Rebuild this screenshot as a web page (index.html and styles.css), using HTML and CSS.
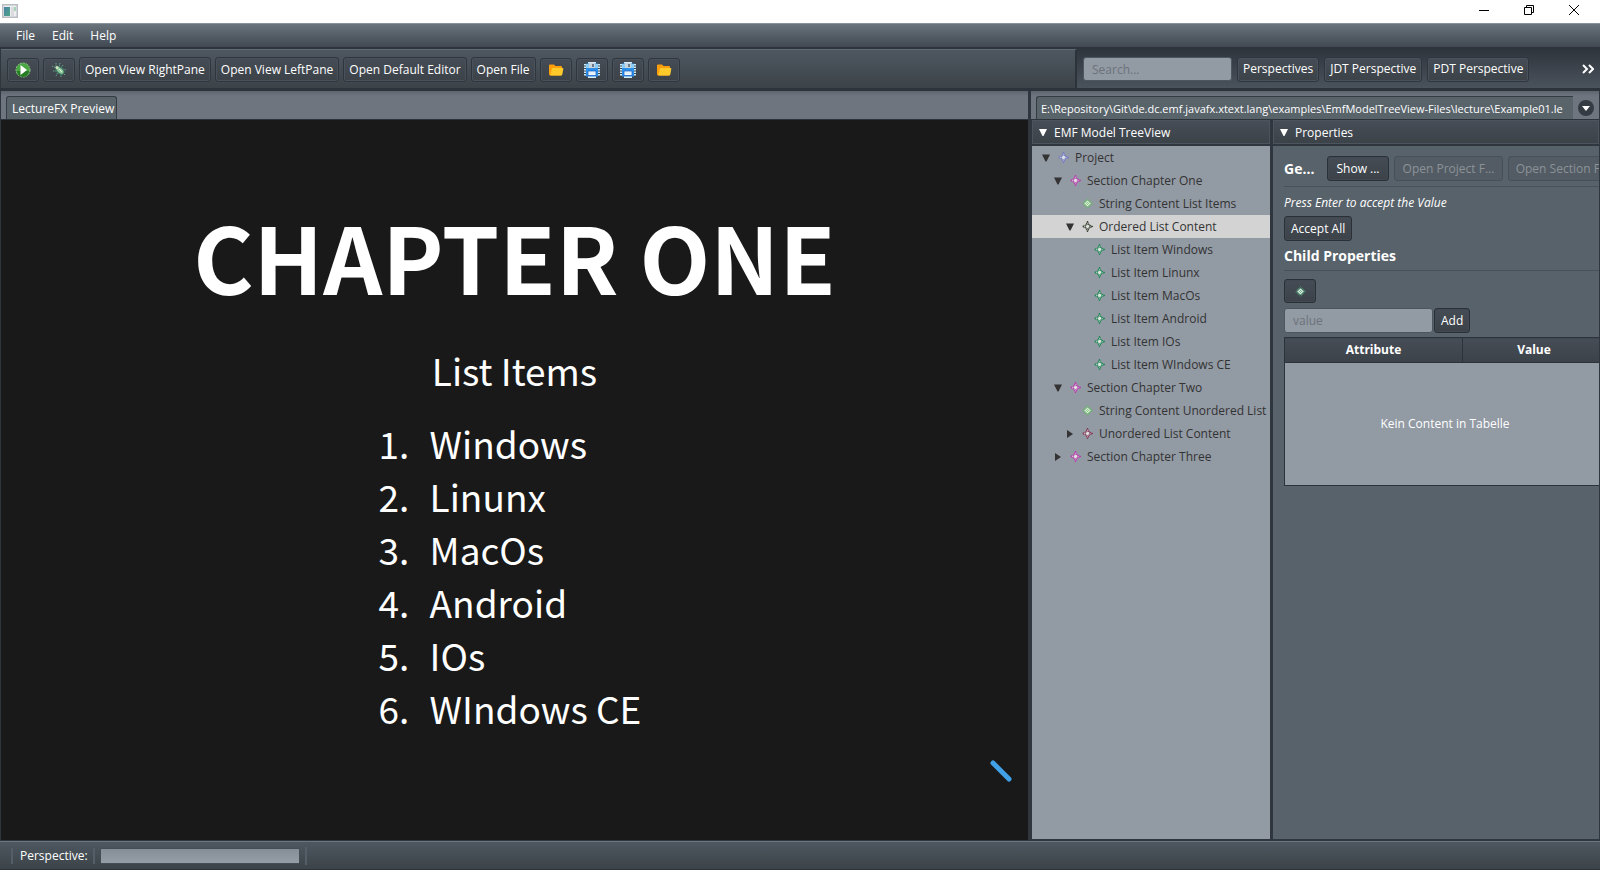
FILE: index.html
```html
<!DOCTYPE html>
<html lang="en">
<head>
<meta charset="utf-8">
<title>LectureFX</title>
<link rel="stylesheet" href="styles.css">
</head>
<body>
<svg class="defs" aria-hidden="true">
  <symbol id="node" viewBox="0 0 11 11">
    <path d="M5.500 .5 7 4 10.500 5.500 7 7 5.500 10.500 4 7 .5 5.500 4 4z" fill="#dde3df" stroke="currentColor" stroke-width="1.200" stroke-dasharray="1.700 .4"/>
    <path d="M5 3h1v1H5zM3 5h1v1H3zM7 5h1v1H7zM5 7h1v1H5z" fill="currentColor" opacity=".6"/>
  </symbol>
  <symbol id="node-full" viewBox="0 0 11 11">
    <path d="M5.500 .5 10.500 5.500 5.500 10.500 .5 5.500z" fill="none" stroke="currentColor" stroke-dasharray="1 .8"/>
    <path d="M5.500 2 9 5.500 5.500 9 2 5.500z" fill="#dcebdc" stroke="currentColor" stroke-width=".8"/>
    <path d="M5 4h1v1H5zM4 5h1v1H4zM6 5h1v1H6zM5 6h1v1H5z" fill="currentColor" opacity=".7"/>
  </symbol>
  <symbol id="folder" viewBox="0 0 16 14">
    <path d="M1 2.500Q1 1.500 2 1.500H6L7.500 3h5.500Q14 3 14 4v7q0 1.500-1.500 1.500h-10Q1 12.500 1 11z" fill="#ff9e0b"/>
    <path d="M5 5h9.500q1 0 .8 1l-1 5.500q-.2 1-1.300 1H3q-1 0-.5-1L3.800 6q.2-1 1.200-1z" fill="#ffcb2b"/>
  </symbol>
  <symbol id="save" viewBox="0 0 16 16">
    <path d="M4 1h8M4 15h8" stroke="#d5edf8" stroke-width="2"/>
    <path d="M1 2v12M15 2v12" stroke="#c7e9fb" stroke-width="2" stroke-dasharray="1.500 1"/>
    <rect x="2" y="1.500" width="12" height="13" fill="#2c8fe8"/>
    <path d="M2 2h3v4H2zM11 2h3v4h-3z" fill="#8bcbf4"/>
    <path d="M5 1h6v5H5z" fill="#c9d4dc"/><path d="M8 2h2v3H8z" fill="#6a7c8c"/>
    <path d="M4 9h8v4.500H4z" fill="#f4faff" stroke="#1b63c4" stroke-width=".8"/>
    <path d="M5 11h6" stroke="#cfe2f2" stroke-width=".8"/>
  </symbol>
  <symbol id="down" viewBox="0 0 8 7"><path d="M0 0h8L4.500 7h-1z" fill="currentColor"/></symbol>
  <symbol id="right" viewBox="0 0 6 8"><path d="M0 0 6 4 0 8z" fill="currentColor"/></symbol>
</svg>
<div class="app">
  <header class="titlebar">
    <svg class="app-icon" width="16" height="14" viewBox="0 0 16 14" aria-hidden="true"><rect x=".75" y=".75" width="14.500" height="12.500" fill="#eceef0" stroke="#b9bdc2" stroke-width="1.500"/><defs><linearGradient id="g" x2="1" y2="1"><stop stop-color="#4a82a8"/><stop offset="1" stop-color="#4ca483"/></linearGradient></defs><path d="M2 3h6v9H2z" fill="url(#g)"/><path d="M9 3h3v9H9z" fill="#d9dbde"/><path d="M12 3h2v4h-2z" fill="#a9d3b9"/></svg>
    <div class="window-controls">
      <button aria-label="Minimize"><svg width="12" height="12"><path d="M1 6.500h10" stroke="#000" fill="none"/></svg></button>
      <button aria-label="Restore"><svg width="12" height="12"><path d="M1.500 3.500h7v7h-7zM3.500 3V1.500h7v7H9" stroke="#000" fill="none"/></svg></button>
      <button aria-label="Close"><svg width="12" height="12"><path d="M1 1l10 10M11 1 1 11" stroke="#000" fill="none"/></svg></button>
    </div>
  </header>
  <nav class="menubar" aria-label="Main menu"><button>File</button><button>Edit</button><button>Help</button></nav>
  <div class="toolbars">
    <div class="toolbar main-tools">
      <button class="btn icon" aria-label="Run"><svg width="16" height="16" viewBox="0 0 16 16"><circle cx="8" cy="8" r="7" fill="#4aa543" stroke="#8cc686" stroke-dasharray="2 1"/><path d="M2 9a6 6 0 0 0 12 0z" fill="#277b25"/><path d="M5.500 3 12 8 5.500 13z" fill="#fff"/></svg></button>
      <button class="btn icon" aria-label="Debug"><svg width="16" height="16" viewBox="0 0 16 16"><path d="M5 1v4M9 1 8 5M1 4l4 2M2 9h4M5 14l2-4M15 8l-4-1M14 13l-3-3M10 15v-4M12 3l-2 3" stroke="#5fa588" stroke-width="1" stroke-dasharray="1.500 .7"/><ellipse cx="9" cy="8.500" rx="4.500" ry="2.800" transform="rotate(42 9 8.500)" fill="#8fc99d" stroke="#3f7c63"/><circle cx="6" cy="5.500" r="1.500" fill="#cfe8bf"/><path d="m8 7 3 3" stroke="#e3f4dc"/></svg></button>
      <button class="btn">Open View RightPane</button>
      <button class="btn">Open View LeftPane</button>
      <button class="btn">Open Default Editor</button>
      <button class="btn">Open File</button>
      <button class="btn icon" aria-label="Open folder"><svg width="16" height="14"><use href="#folder"/></svg></button>
      <button class="btn icon" aria-label="Save"><svg width="16" height="16"><use href="#save"/></svg></button>
      <button class="btn icon" aria-label="Save as"><svg width="16" height="16"><use href="#save"/></svg></button>
      <button class="btn icon" aria-label="Browse folder"><svg width="16" height="14"><use href="#folder"/></svg></button>
    </div>
    <div class="toolbar side-tools">
      <input class="field" type="text" placeholder="Search..." aria-label="Search">
      <button class="btn">Perspectives</button>
      <button class="btn">JDT Perspective</button>
      <button class="btn">PDT Perspective</button>
      <button class="overflow" aria-label="More tools"><svg width="12" height="10" viewBox="0 0 12 10"><path d="M1 1l4 4-4 4M7 1l4 4-4 4" fill="none" stroke="#fff" stroke-width="2"/></svg></button>
    </div>
  </div>
  <main class="workspace">
    <section class="editor">
      <div class="tabs" role="tablist"><button class="tab" role="tab" aria-selected="true">LectureFX Preview</button></div>
      <article class="slide">
        <h1>CHAPTER ONE</h1>
        <p>List Items</p>
        <ol><li>Windows</li><li>Linunx</li><li>MacOs</li><li>Android</li><li>IOs</li><li>WIndows CE</li></ol>
        <svg class="nav-mark" width="22" height="22" viewBox="0 0 22 22" aria-hidden="true"><path d="M3 3l16 16" stroke="#42a0e6" stroke-width="5" stroke-linecap="round"/></svg>
      </article>
    </section>
    <section class="model">
      <div class="tabs" role="tablist">
        <button class="tab path-tab" role="tab" aria-selected="true">E:\Repository\Git\de.dc.emf.javafx.xtext.lang\examples\EmfModelTreeView-Files\lecture\Example01.le</button>
        <button class="tab-menu" aria-label="Show tabs"><svg width="8" height="5" viewBox="0 0 8 5"><path d="M0 0h8L4 5z" fill="#fff"/></svg></button>
      </div>
      <div class="split">
        <section class="pane tree-pane">
          <h2 class="pane-title"><svg width="8" height="7"><use href="#down"/></svg>EMF Model TreeView</h2>
          <ul class="tree" role="tree">
            <li class="row l1" role="treeitem"><svg class="arrow"><use href="#down"/></svg><svg class="node blue"><use href="#node"/></svg>Project</li>
            <li class="row l2" role="treeitem"><svg class="arrow"><use href="#down"/></svg><svg class="node pink"><use href="#node"/></svg>Section Chapter One</li>
            <li class="row l3" role="treeitem"><span class="arrow"></span><svg class="node lime"><use href="#node-full"/></svg>String Content List Items</li>
            <li class="row l3 selected" role="treeitem" aria-selected="true"><svg class="arrow"><use href="#down"/></svg><svg class="node olive"><use href="#node"/></svg>Ordered List Content</li>
            <li class="row l4" role="treeitem"><span class="arrow"></span><svg class="node green"><use href="#node"/></svg>List Item Windows</li>
            <li class="row l4" role="treeitem"><span class="arrow"></span><svg class="node green"><use href="#node"/></svg>List Item Linunx</li>
            <li class="row l4" role="treeitem"><span class="arrow"></span><svg class="node green"><use href="#node"/></svg>List Item MacOs</li>
            <li class="row l4" role="treeitem"><span class="arrow"></span><svg class="node green"><use href="#node"/></svg>List Item Android</li>
            <li class="row l4" role="treeitem"><span class="arrow"></span><svg class="node green"><use href="#node"/></svg>List Item IOs</li>
            <li class="row l4" role="treeitem"><span class="arrow"></span><svg class="node green"><use href="#node"/></svg>List Item WIndows CE</li>
            <li class="row l2" role="treeitem"><svg class="arrow"><use href="#down"/></svg><svg class="node pink"><use href="#node"/></svg>Section Chapter Two</li>
            <li class="row l3" role="treeitem"><span class="arrow"></span><svg class="node lime"><use href="#node-full"/></svg>String Content Unordered List</li>
            <li class="row l3" role="treeitem"><svg class="arrow"><use href="#right"/></svg><svg class="node wine"><use href="#node"/></svg>Unordered List Content</li>
            <li class="row l2" role="treeitem"><svg class="arrow"><use href="#right"/></svg><svg class="node pink"><use href="#node"/></svg>Section Chapter Three</li>
          </ul>
        </section>
        <section class="pane props-pane">
          <h2 class="pane-title"><svg width="8" height="7"><use href="#down"/></svg>Properties</h2>
          <div class="props">
            <div class="props-head">
              <h3>Ge...</h3>
              <button class="btn strong show">Show ...</button>
              <button class="btn strong project" disabled>Open Project F...</button>
              <button class="btn strong project" disabled>Open Section F...</button>
            </div>
            <p class="hint">Press Enter to accept the Value</p>
            <button class="btn strong">Accept All</button>
            <h3 class="child">Child Properties</h3>
            <button class="btn strong icon add-node" aria-label="Add node"><svg class="node mint"><use href="#node-full"/></svg></button>
            <div class="value-row"><input class="field" type="text" placeholder="value" aria-label="Value"><button class="btn strong">Add</button></div>
            <table class="grid">
              <thead><tr><th class="attr" scope="col">Attribute</th><th scope="col">Value</th></tr></thead>
              <tbody><tr><td colspan="2">Kein Content in Tabelle</td></tr></tbody>
            </table>
          </div>
        </section>
      </div>
    </section>
  </main>
  <footer class="statusbar"><label for="load">Perspective:</label><progress id="load" value="0" max="1"></progress></footer>
</div>
</body>
</html>
```
FILE: styles.css
```css
* { box-sizing: border-box; }
body { margin: 0; font: 12px/16px "Open Sans", "Noto Sans", sans-serif; color: #fff; background: #2f363e; }
button, input { font: inherit; color: inherit; }
button { margin: 0; padding: 0; border: 0; background: none; white-space: nowrap; }
h1, h2, h3, p, ol, ul { margin: 0; padding: 0; }
svg { display: block; flex: none; }
.defs { position: absolute; width: 0; height: 0; }
.app { display: flex; flex-direction: column; height: 100vh; overflow: hidden; }

.titlebar { display: flex; justify-content: space-between; height: 23px; padding: 4px 2px; background: #fff; }
.window-controls { display: flex; gap: 33px; padding-right: 18px; }
.window-controls button { height: 12px; }

.menubar { display: flex; gap: 17px; height: 24px; padding: 1px 16px 0; border-top: 1px solid #87929a; background: linear-gradient(#69747d, #414851); }

.toolbars { display: flex; height: 44px; border-top: 2px solid #2d343c; border-bottom: 3px solid #2d333b; }
.toolbar { display: flex; align-items: center; padding-top: 1px; }
.main-tools { flex: 1; gap: 4px; margin-left: 1px; padding-left: 6px; border-top: 1px solid #5f6a72; border-right: 2px solid #2d333b; background: linear-gradient(#4e5660, #3c4449); }
.side-tools { flex: 0 0 523px; gap: 5px; padding-left: 6px; padding-right: 6px; background: linear-gradient(#2f353d, #4a525b); }
.btn { height: 25px; padding: 0 5px; border: 1px solid #30363e; border-radius: 3px; background: linear-gradient(#454c55, #3c4248); box-shadow: inset 0 0 0 1px #49515a; }
.btn.strong { padding: 0 6px; border-color: #2a3037; box-shadow: inset 0 0 0 1px #424951; }
.btn.icon { display: flex; align-items: center; justify-content: center; width: 32px; height: 24px; padding: 0; }
.btn:disabled { color: #8b9298; background: #535c64; border-color: #465058; box-shadow: none; }
.overflow { margin-left: auto; }
.field { width: 149px; height: 24px; padding: 0 8px; border: 1px solid #4d565f; border-radius: 3px; background: #929aa4; color: #333; outline: 0; }
.field::placeholder { color: #6c737a; opacity: 1; }

.workspace { display: flex; flex: 1; min-height: 0; gap: 3px; padding: 0 1px; }
.editor { display: flex; flex-direction: column; flex: 1; min-width: 0; }
.tabs { display: flex; flex: none; height: 29px; padding: 5px 5px 0; border-bottom: 1px solid #2d333b; background: linear-gradient(#5d656e, #6e757f 5px); }
.tab { height: 23px; padding: 2px 2px 0 5px; border: 1px solid #343b43; border-bottom: 0; border-radius: 3px 3px 0 0; background: #58636a; }
.slide { position: relative; flex: 1; background: #191919; font-family: "Noto Sans CJK SC", sans-serif; font-size: 37px; line-height: 53px; text-align: center; padding-top: 78px; margin-bottom: 1px; }
.slide h1 { font-size: 92px; line-height: 114px; font-weight: 700; }
.slide p { margin-top: 32px; }
.slide ol { display: table; margin: 20px auto 0; text-align: left; padding-left: 30px; }
.slide li { padding-left: 12px; }
.nav-mark { position: absolute; right: 16px; bottom: 58px; }

.model { display: flex; flex-direction: column; flex: 0 0 568px; min-width: 0; }
.path-tab { flex: 1; min-width: 0; padding-left: 4px; font-size: 11px; text-align: left; border-right: 0; border-radius: 3px 0 0 0; }
.tab-menu { display: flex; align-items: center; justify-content: center; flex: none; width: 16px; height: 16px; margin: 4px 0 0 5px; border-radius: 50%; background: #343b43; }
.split { display: flex; flex: 1; min-height: 0; gap: 3px; padding-bottom: 2px; }
.pane { display: flex; flex-direction: column; min-width: 0; }
.tree-pane { flex: 0 0 239px; padding-left: 1px; }
.props-pane { flex: 1; }
.pane-title { display: flex; flex: none; align-items: center; gap: 7px; height: 24px; margin-bottom: 2px; padding: 1px 0 0 6px; border: 1px solid #4c555d; font-size: 12px; font-weight: 400; background: linear-gradient(#464d57, #3b4248); }
.tree { flex: 1; list-style: none; background: #929aa4; color: #333; }
.row { display: flex; align-items: center; height: 23px; white-space: nowrap; }
.row.selected { background: #d3d3d3; }
.arrow { width: 8px; height: 8px; margin-right: 8px; flex: none; }
.node { width: 11px; height: 11px; margin-right: 6px; }
.l1 { padding-left: 10px; }
.l2 { padding-left: 22px; }
.l3 { padding-left: 34px; }
.l4 { padding-left: 46px; }
.blue { color: #7378c4; }
.pink { color: #b93cae; }
.lime { color: #62bd5e; }
.olive { color: #3d4436; }
.green { color: #218657; }
.mint { color: #4c9c78; }
.wine { color: #87395a; }

.props { display: flex; flex-direction: column; align-items: flex-start; flex: 1; padding: 10px 0 0 11px; overflow: hidden; background: #58626a; }
.props-head { display: flex; align-items: center; gap: 5px; padding-bottom: 5px; border-bottom: 1px solid #485159; min-width: 100%; }
h3 { font-size: 14px; line-height: 20px; font-weight: 700; }
.props-head h3 { flex: 0 0 38px; }
.props-head .btn { flex: none; }
.show { width: 62px; }
.project { width: 109px; }
.hint { margin: 8px 0 5px; font-style: italic; }
.child { align-self: stretch; margin: 5px 0 8px; padding-bottom: 4px; border-bottom: 1px solid #485159; }
.add-node .node { margin: 0; }
.value-row { display: flex; gap: 1px; margin: 5px 0 4px; }
.value-row .field { height: 25px; }
.grid { width: 322px; border: 1px solid #2d333b; border-collapse: collapse; table-layout: fixed; background: #929aa4; flex: none; }
.grid th { height: 25px; padding: 0; border: 1px solid #2d333b; background: linear-gradient(#464d57, #3b4248); }
.attr { width: 178px; }
.grid td { height: 123px; padding: 0; text-align: center; }

.statusbar { display: flex; align-items: center; flex: none; height: 29px; padding-left: 11px; border-top: 1px solid #6b767e; border-bottom: 1px solid #2d333b; background: linear-gradient(#4e5660, #3c4449); }
.statusbar label { padding: 0 5px 0 7px; border: 2px solid #555e66; border-width: 0 2px; }
progress { appearance: none; width: 200px; height: 16px; margin: 0 5px; border: 1px solid #444c55; border-radius: 2px; background: #8e96a0; }
progress::-webkit-progress-bar { background: linear-gradient(#858d97, #959da6); }
.statusbar::after { content: ""; width: 2px; height: 18px; background: #555e66; }
```
